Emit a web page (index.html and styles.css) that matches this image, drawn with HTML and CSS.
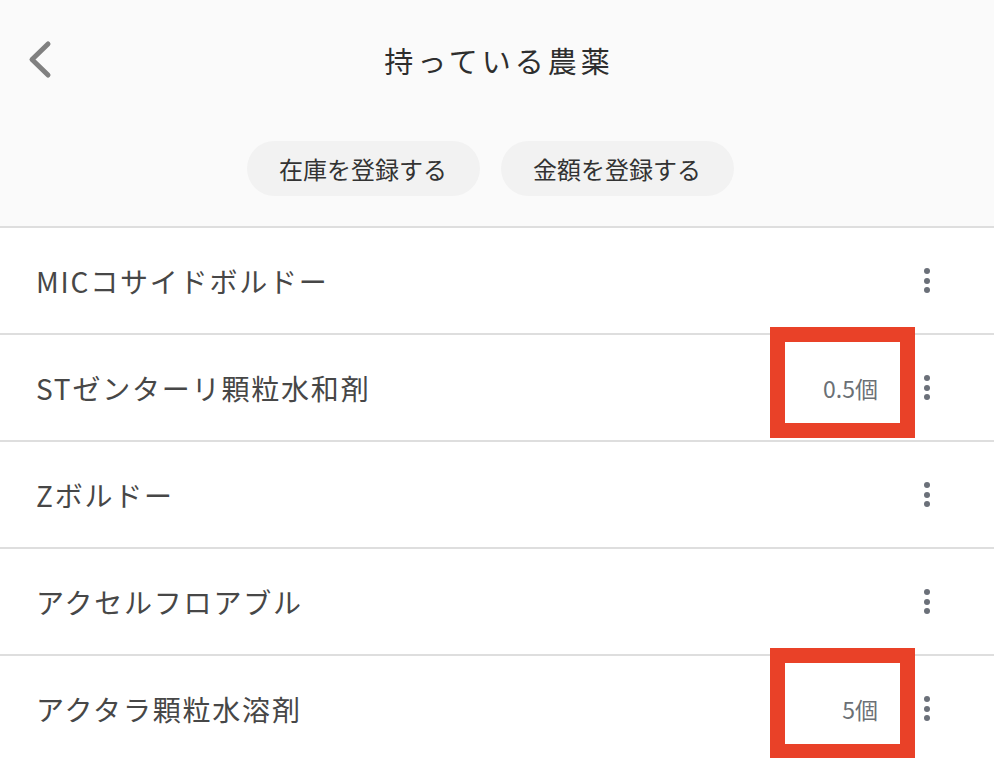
FILE: index.html
```html
<!DOCTYPE html>
<html lang="ja">
<head>
<meta charset="utf-8">
<title>持っている農薬</title>
<link rel="stylesheet" href="styles.css">
</head>
<body>
<header class="header">
  <div class="topbar">
    <button class="back" aria-label="戻る">
      <svg width="30" height="40" viewBox="0 0 30 40"><path d="M22 4 L6 19.5 L22 35" fill="none" stroke="#808080" stroke-width="5" stroke-linecap="round" stroke-linejoin="round"/></svg>
    </button>
    <h1 class="title">持っている農薬</h1>
  </div>
  <div class="actions">
    <button class="pill">在庫を登録する</button>
    <button class="pill">金額を登録する</button>
  </div>
</header>
<ul class="list">
  <li class="row"><span class="name">MICコサイドボルドー</span><button class="more" aria-label="メニュー"><span></span><span></span><span></span></button></li>
  <li class="row"><span class="name">STゼンターリ顆粒水和剤</span><span class="qty">0.5個</span><button class="more" aria-label="メニュー"><span></span><span></span><span></span></button><span class="mark"></span></li>
  <li class="row"><span class="name">Zボルドー</span><button class="more" aria-label="メニュー"><span></span><span></span><span></span></button></li>
  <li class="row"><span class="name">アクセルフロアブル</span><button class="more" aria-label="メニュー"><span></span><span></span><span></span></button></li>
  <li class="row"><span class="name">アクタラ顆粒水溶剤</span><span class="qty">5個</span><button class="more" aria-label="メニュー"><span></span><span></span><span></span></button><span class="mark"></span></li>
</ul>
</body>
</html>
```
FILE: styles.css
```css
* { box-sizing: border-box; }
html, body {
  margin: 0;
  padding: 0;
  background: #ffffff;
  font-family: "Noto Sans CJK JP", "Noto Sans", sans-serif;
  overflow: hidden;
}
.header {
  background: #fafafa;
  border-bottom: 2px solid #dedede;
}
.topbar {
  height: 120px;
  display: flex;
  align-items: center;
  justify-content: center;
  position: relative;
}
.back {
  position: absolute;
  left: 26px;
  top: 40px;
  border: 0;
  background: none;
  padding: 0;
  display: flex;
}
.title {
  margin: 0;
  font-size: 29px;
  font-weight: 400;
  letter-spacing: 4px;
  color: #2e2e2e;
  padding-left: 4px;
}
.actions {
  display: flex;
  justify-content: center;
  gap: 21px;
  padding: 21px 14px 30px 0;
}
.pill {
  width: 233px;
  height: 55px;
  border: 0;
  border-radius: 28px;
  background: #f2f2f2;
  font-family: inherit;
  font-size: 24px;
  color: #333333;
  padding: 0;
}
.list {
  list-style: none;
  margin: 0;
  padding: 0;
}
.row {
  position: relative;
  height: 107px;
  border-bottom: 2px solid #dedede;
  display: flex;
  align-items: center;
  padding: 0 64px 0 36px;
}
.name {
  flex: 1;
  font-size: 28px;
  letter-spacing: 1.8px;
  color: #474747;
}
.qty {
  font-size: 23px;
  color: #6b7075;
  margin-right: 46px;
}
.more {
  width: 6px;
  height: 25px;
  border: 0;
  background: none;
  padding: 0;
  display: flex;
  flex-direction: column;
  justify-content: space-between;
  align-items: center;
}
.more span {
  width: 6px;
  height: 6px;
  border-radius: 50%;
  background: #6b7079;
}
.mark {
  position: absolute;
  left: 770px;
  top: -8px;
  width: 145px;
  height: 111px;
  border: 15px solid #e94128;
}
```
